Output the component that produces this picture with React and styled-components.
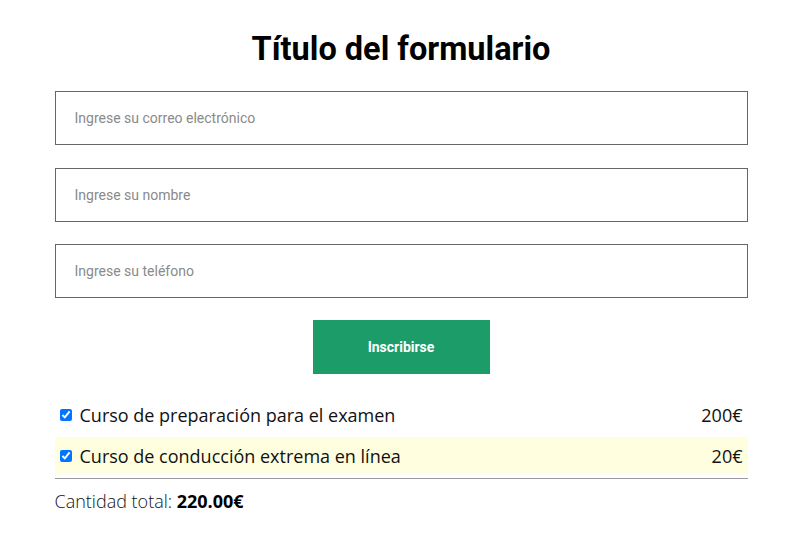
import React from "react";
import styled, { createGlobalStyle } from "styled-components";

const Global = createGlobalStyle`
  body { margin: 0; background: #fff; font-family: "Roboto", sans-serif; }
  * { box-sizing: border-box; }
`;

const Form = styled.form`
  width: 693px;
  margin: 0 auto;
  padding-top: 30px;
  display: flex;
  flex-direction: column;
`;

const Title = styled.h1`
  margin: 0 0 23px;
  font-family: "Roboto", sans-serif;
  font-weight: 700;
  font-size: 32.5px;
  line-height: 38px;
  text-align: center;
  color: #000;
`;

const Fields = styled.div`
  display: flex;
  flex-direction: column;
  gap: 22.5px;
`;

const Input = styled.input`
  display: block;
  width: 100%;
  height: 54px;
  padding: 0 19px;
  border: 1px solid #666;
  border-radius: 0;
  font-family: "Roboto", sans-serif;
  font-size: 14px;
  color: #333;
  outline: none;
  &::placeholder { color: #8a8a8a; }
`;

const Button = styled.button`
  align-self: center;
  margin-top: 22px;
  width: 177px;
  height: 54px;
  border: none;
  background: #1b9c69;
  color: #fff;
  font-family: "Roboto", sans-serif;
  font-weight: 700;
  font-size: 14px;
  cursor: pointer;
`;

const List = styled.div`
  margin-top: 22px;
  display: flex;
  flex-direction: column;
  gap: 4px;
  padding-bottom: 4px;
  border-bottom: 1px solid #999;
`;

const Row = styled.label`
  display: flex;
  align-items: center;
  height: 37px;
  padding: 0 5px;
  background: ${(p) => (p.$highlight ? "#ffffdf" : "transparent")};
  font-family: "Open Sans", sans-serif;
  font-size: 18px;
  color: #111;
`;

const Check = styled.input`
  width: 12px;
  height: 12px;
  margin: 0 8px 0 0;
  accent-color: #0075ff;
`;

const Name = styled.span`
  flex: 1;
`;

const Price = styled.span``;

const Total = styled.p`
  margin: 10px 0 0;
  font-family: "Open Sans", sans-serif;
  font-weight: 300;
  font-size: 18px;
  color: #111;
  strong { font-weight: 700; color: #000; }
`;

const courses = [
  { name: "Curso de preparación para el examen", price: "200€" },
  { name: "Curso de conducción extrema en línea", price: "20€", highlight: true },
];

export default function App() {
  return (
    <>
      <Global />
      <Form onSubmit={(e) => e.preventDefault()}>
        <Title>Título del formulario</Title>
        <Fields>
          <Input type="email" placeholder="Ingrese su correo electrónico" />
          <Input type="text" placeholder="Ingrese su nombre" />
          <Input type="tel" placeholder="Ingrese su teléfono" />
        </Fields>
        <Button type="submit">Inscribirse</Button>
        <List>
          {courses.map((c) => (
            <Row key={c.name} $highlight={c.highlight}>
              <Check type="checkbox" defaultChecked />
              <Name>{c.name}</Name>
              <Price>{c.price}</Price>
            </Row>
          ))}
        </List>
        <Total>
          Cantidad total: <strong>220.00€</strong>
        </Total>
      </Form>
    </>
  );
}
